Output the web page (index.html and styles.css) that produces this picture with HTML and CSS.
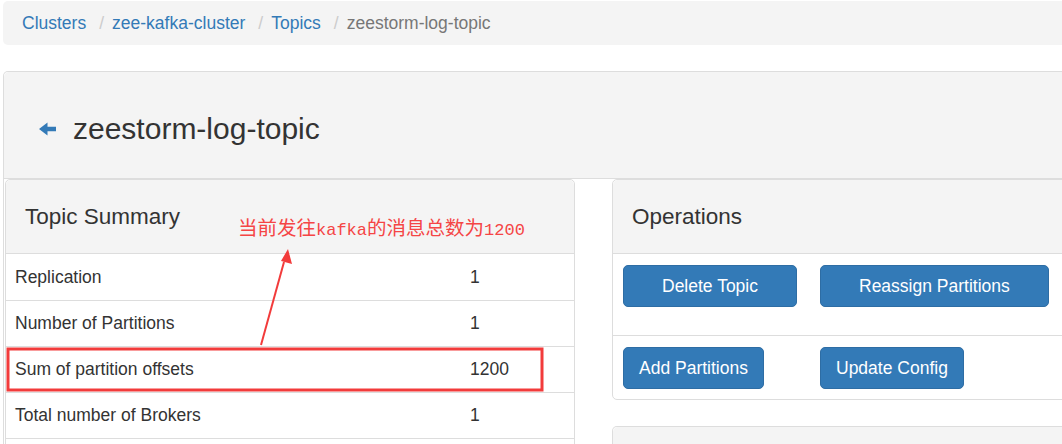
FILE: index.html
```html
<!DOCTYPE html>
<html lang="en">
<head>
<meta charset="utf-8">
<title>zeestorm-log-topic</title>
<link rel="stylesheet" href="styles.css">
</head>
<body>
<div class="page">
  <ol class="breadcrumb">
    <li><a href="#">Clusters</a></li>
    <li class="sep">/</li>
    <li><a href="#">zee-kafka-cluster</a></li>
    <li class="sep">/</li>
    <li><a href="#">Topics</a></li>
    <li class="sep">/</li>
    <li class="active">zeestorm-log-topic</li>
  </ol>

  <div class="panel main">
    <div class="main-heading">
      <h3 class="page-title">
        <svg class="back" viewBox="0 0 18 14" width="17" height="14" aria-hidden="true"><polygon points="0,7 9,0 9,4.5 18,4.5 18,9.5 9,9.5 9,14" fill="#337ab7"/></svg>
        <span>zeestorm-log-topic</span>
      </h3>
    </div>
    <div class="main-body">
      <div class="col-left">
        <div class="panel summary">
          <div class="panel-heading"><h4 class="panel-title">Topic Summary</h4></div>
          <table class="table">
            <tbody>
              <tr><td class="label">Replication</td><td>1</td></tr>
              <tr><td class="label">Number of Partitions</td><td>1</td></tr>
              <tr><td class="label">Sum of partition offsets</td><td>1200</td></tr>
              <tr><td class="label">Total number of Brokers</td><td>1</td></tr>
              <tr class="empty-row"><td class="label"></td><td></td></tr>
            </tbody>
          </table>
        </div>
      </div>
      <div class="col-right">
        <div class="panel ops">
          <div class="panel-heading"><h4 class="panel-title">Operations</h4></div>
          <div class="ops-row ops-first">
            <button class="btn btn-wide">Delete Topic</button>
            <button class="btn btn-wide">Reassign Partitions</button>
          </div>
          <div class="ops-row">
            <button class="btn">Add Partitions</button>
            <button class="btn">Update Config</button>
          </div>
        </div>
        <div class="panel next">
          <div class="panel-heading next-heading"></div>
        </div>
      </div>
    </div>
  </div>

  <div class="annotation">当前发往<span class="latin">kafka</span>的消息总数为<span class="latin">1200</span></div>
  <svg class="overlay" width="1062" height="444" viewBox="0 0 1062 444" aria-hidden="true">
    <rect x="8" y="349" width="534" height="41" fill="none" stroke="#f23b3b" stroke-width="3"/>
    <line x1="261" y1="345" x2="284" y2="262" stroke="#f23b3b" stroke-width="2"/>
    <polygon points="288,249 292,264 281,261" fill="#f23b3b"/>
  </svg>
</div>
</body>
</html>
```

FILE: styles.css
```css
html, body {
  margin: 0;
  padding: 0;
  overflow: hidden;
  background: #fff;
}

body {
  font-family: "Liberation Sans", Arial, Helvetica, sans-serif;
  font-size: 17.5px;
  line-height: 25px;
  color: #333;
}

.page {
  position: relative;
  width: 1130px;
  padding: 1px 0 0 3px;
}

/* breadcrumb */
.breadcrumb {
  list-style: none;
  margin: 0;
  padding: 10px 19px 10px;
  display: flex;
  align-items: center;
  background: #f4f4f4;
  border-radius: 5px;
  line-height: 24px;
}

.breadcrumb a {
  color: #337ab7;
  text-decoration: none;
}

.breadcrumb .sep {
  color: #ccc;
  padding: 0 8px 0 13px;
}

.breadcrumb .active {
  color: #777;
}

/* panels */
.panel {
  border: 1px solid #ddd;
  border-radius: 5px;
  background: #fff;
}

.main {
  margin-top: 26px;
  border-bottom: none;
}

.main-heading {
  background: #f4f4f4;
  border-bottom: 1px solid #ddd;
  border-radius: 5px 5px 0 0;
  padding: 40px 36px 33px 35px;
}

.page-title {
  margin: 0;
  display: flex;
  align-items: center;
  gap: 17px;
  font-size: 30px;
  line-height: 33px;
  font-weight: 400;
  color: #333;
}

.back {
  display: block;
  margin-top: 1px;
}

.main-body {
  display: flex;
  gap: 37px;
  padding: 0 0 0 1px;
}

.col-left {
  width: 570px;
  flex: none;
}

.col-right {
  flex: 1;
  display: flex;
  flex-direction: column;
  gap: 26px;
}

.panel-heading {
  background: #f4f4f4;
  border-bottom: 1px solid #ddd;
  border-radius: 5px 5px 0 0;
  padding: 24px 19px;
}

.panel-title {
  margin: 0;
  font-size: 22.5px;
  line-height: 25px;
  font-weight: 400;
  color: #333;
}

/* summary table */
.table {
  width: 100%;
  border-collapse: collapse;
}

.table td {
  padding: 10px 9px 10px 9px;
  border-top: 1px solid #ddd;
  line-height: 25px;
}

.table tr:first-child td {
  border-top: none;
  padding-top: 11px;
  padding-bottom: 10px;
}

.table td.label {
  width: 437px;
}

.table .empty-row td {
  height: 25px;
}

/* operations */
.ops-row {
  display: grid;
  grid-template-columns: 197px auto;
  justify-items: start;
  padding: 11px 10px 10px;
}

.ops-first {
  padding-bottom: 28px;
  border-bottom: 1px solid #ddd;
}

.btn {
  font-family: inherit;
  font-size: 17.5px;
  line-height: 25px;
  color: #fff;
  background: #337ab7;
  border: 1px solid #2e6da4;
  border-radius: 5px;
  padding: 7.5px 15px;
  cursor: pointer;
}

.btn-wide {
  padding: 7.5px 38px;
}

.next {
  height: 60px;
  overflow: hidden;
  border-bottom: none;
}

.next-heading {
  height: 25px;
}

/* annotation overlay */
.annotation {
  position: absolute;
  left: 238px;
  top: 214px;
  font-family: "Noto Sans CJK SC", "Liberation Serif", serif;
  font-size: 19.5px;
  line-height: 26px;
  color: #f54545;
  white-space: nowrap;
}

.annotation .latin {
  font-family: "Liberation Mono", monospace;
  font-size: 17px;
}

.overlay {
  position: absolute;
  left: 0;
  top: 0;
  pointer-events: none;
}
```
